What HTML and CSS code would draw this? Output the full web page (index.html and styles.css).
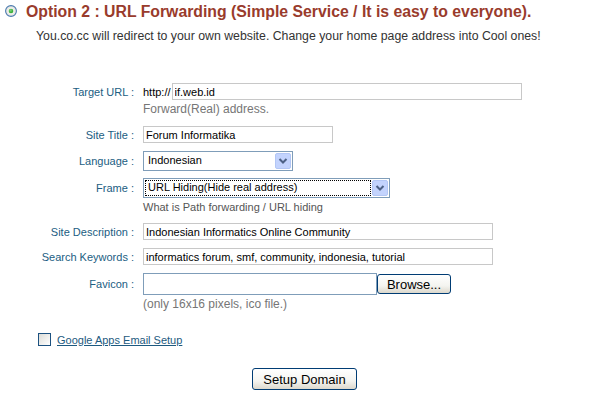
FILE: index.html
```html
<!DOCTYPE html>
<html>
<head>
	<meta http-equiv="Content-Type" content="text/html; charset=utf-8">
	<title>co.cc :: URL Forwarding</title>
	<link rel="stylesheet" href="styles.css">
</head>
<body>
	<div class="option">
		<h2 class="option__title">
			<svg class="option__radio" width="12" height="12" viewBox="0 0 12 12">
				<defs>
					<radialGradient id="radioBg" cx="50%" cy="50%" r="60%">
						<stop offset="0" stop-color="#ffffff"/>
						<stop offset="1" stop-color="#dcdcd4"/>
					</radialGradient>
					<radialGradient id="radioDot" cx="40%" cy="35%" r="70%">
						<stop offset="0" stop-color="#7bd47b"/>
						<stop offset="1" stop-color="#21a121"/>
					</radialGradient>
				</defs>
				<circle cx="6" cy="6" r="5.4" fill="url(#radioBg)" stroke="#4a7ab0" stroke-width="1.1"/>
				<circle cx="6" cy="6" r="2.3" fill="url(#radioDot)"/>
			</svg>
			<span>Option 2 : URL Forwarding (Simple Service / It is easy to everyone).</span>
		</h2>
		<p class="option__intro">You.co.cc will redirect to your own website. Change your home page address into Cool ones!</p>
	</div>

	<form name="forwarding" class="fwd">
		<div class="fwd__row">
			<label class="fwd__label">Target URL :</label>
			<div class="fwd__field">
				<span class="fwd__prefix">http://</span><input class="fwd__inp fwd__inp_url" name="url" value="if.web.id">
			</div>
		</div>
		<div class="fwd__hint">Forward(Real) address.</div>

		<div class="fwd__row fwd__row_title">
			<label class="fwd__label">Site Title :</label>
			<div class="fwd__field">
				<input class="fwd__inp fwd__inp_title" name="title" value="Forum Informatika">
			</div>
		</div>

		<div class="fwd__row fwd__row_lang">
			<label class="fwd__label">Language :</label>
			<div class="fwd__field">
				<div class="combo combo_lang">
					<span class="combo__val">Indonesian</span>
					<span class="combo__btn">
						<svg width="16" height="16" viewBox="0 0 16 16">
							<rect x="0.5" y="0.5" width="15" height="15" rx="1.5" fill="#c3d3fd" stroke="#b2c6f5"/>
							<polyline points="4.5,6 8,9.5 11.5,6" fill="none" stroke="#4d6185" stroke-width="2"/>
						</svg>
					</span>
				</div>
			</div>
		</div>

		<div class="fwd__row fwd__row_frame">
			<label class="fwd__label">Frame :</label>
			<div class="fwd__field">
				<div class="combo combo_frame combo_focus">
					<span class="combo__val">URL Hiding(Hide real address)</span>
					<span class="combo__btn">
						<svg width="16" height="16" viewBox="0 0 16 16">
							<rect x="0.5" y="0.5" width="15" height="15" rx="1.5" fill="#c3d3fd" stroke="#b2c6f5"/>
							<polyline points="4.5,6 8,9.5 11.5,6" fill="none" stroke="#4d6185" stroke-width="2"/>
						</svg>
					</span>
				</div>
			</div>
		</div>
		<div class="fwd__hint fwd__hint_dark">What is Path forwarding / URL hiding</div>

		<div class="fwd__row fwd__row_desc">
			<label class="fwd__label">Site Description :</label>
			<div class="fwd__field">
				<input class="fwd__inp fwd__inp_wide" name="desc" value="Indonesian Informatics Online Community">
			</div>
		</div>

		<div class="fwd__row fwd__row_keys">
			<label class="fwd__label">Search Keywords :</label>
			<div class="fwd__field">
				<input class="fwd__inp fwd__inp_wide" name="keywords" value="informatics forum, smf, community, indonesia, tutorial">
			</div>
		</div>

		<div class="fwd__row fwd__row_icon">
			<label class="fwd__label">Favicon :</label>
			<div class="fwd__field">
				<span class="file"></span><button type="button" class="btn btn_browse">Browse...</button>
			</div>
		</div>
		<div class="fwd__hint">(only 16x16 pixels, ico file.)</div>

		<div class="fwd__check">
			<span class="check"></span>
			<a class="fwd__link" href="#">Google Apps Email Setup</a>
		</div>

		<div class="fwd__submit">
			<button type="button" class="btn btn_submit">Setup Domain</button>
		</div>
	</form>
</body>
</html>
```

FILE: styles.css
```css
body {
	margin: 0;
	font-size: 11px;
	font-family: "Liberation Sans", Arial, sans-serif;
	color: #000;
	background-color: #fff;
}


.option {
	padding: 3px 0 0 5px;
}
	.option__title {
		display: flex;
		align-items: center;
		gap: 9px;
		margin: 0;
		color: #993b2c;
		font-size: 15.8px;
		line-height: 18px;
		font-weight: bold;
	}
		.option__radio {
			margin-top: -2px;
			flex: none;
		}

	.option__intro {
		margin: 8px 0 0 31px;
		color: #333;
		font-size: 12.3px;
		line-height: 14px;
	}


.fwd {
	margin: 40px 0 0;
}
	.fwd__row {
		display: flex;
		align-items: center;
		gap: 9px;
		height: 17px;
	}
	.fwd__row_title { margin-top: 10px; }
	.fwd__row_lang { margin-top: 8px; height: 20px; }
	.fwd__row_frame { margin-top: 7px; height: 20px; }
	.fwd__row_desc { margin-top: 9px; }
	.fwd__row_keys { margin-top: 8px; }
	.fwd__row_icon { margin-top: 8px; height: 22px; }

		.fwd__label {
			width: 134px;
			flex: none;
			text-align: right;
			color: #215d82;
		}

		.fwd__field {
			display: flex;
			align-items: center;
		}
			.fwd__prefix {
				margin-right: 1px;
			}

	.fwd__hint {
		margin: 2px 0 0 143px;
		font-size: 12px;
		line-height: 14px;
		color: #767676;
	}
	.fwd__hint_dark {
		font-size: 11px;
		color: #555;
	}

	.fwd__check {
		display: flex;
		align-items: center;
		gap: 6px;
		margin: 22px 0 0 38px;
	}
		.fwd__link {
			color: #1d5a80;
		}

	.fwd__submit {
		margin: 22px 0 0 252px;
	}


.fwd__inp {
	box-sizing: border-box;
	height: 17px;
	margin: 0;
	padding: 0 2px;
	border: 1px solid #c8c8c8;
	font: 11px "Liberation Sans", Arial, sans-serif;
	color: #000;
	outline: none;
}
.fwd__inp_url { width: 350px; }
.fwd__inp_title { width: 190px; }
.fwd__inp_wide { width: 350px; }


.combo {
	box-sizing: border-box;
	display: flex;
	align-items: center;
	height: 20px;
	padding: 1px;
	border: 1px solid #7f9db9;
	background-color: #fff;
}
.combo_lang { width: 150px; }
.combo_frame { width: 247px; }
	.combo__val {
		flex: 1;
		box-sizing: border-box;
		height: 16px;
		margin-right: 1px;
		padding: 0 3px;
		line-height: 15px;
		font-size: 11px;
	}
	.combo_focus .combo__val {
		outline: 1px dotted #000;
		outline-offset: -1px;
	}
	.combo__btn {
		display: block;
		height: 16px;
	}
		.combo__btn svg { display: block; }


.file {
	box-sizing: border-box;
	display: block;
	width: 234px;
	height: 22px;
	border: 1px solid #7f9db9;
	background-color: #fff;
}


.btn {
	box-sizing: border-box;
	margin: 0;
	padding: 0;
	border: 1px solid #003c74;
	border-radius: 3px;
	background: linear-gradient(#ffffff, #f4f4f0 60%, #dcd8cc);
	font: 13px "Liberation Sans", Arial, sans-serif;
	color: #000;
}
.btn_browse {
	width: 74px;
	height: 20px;
}
.btn_submit {
	width: 105px;
	height: 22px;
}


.check {
	box-sizing: border-box;
	display: block;
	width: 13px;
	height: 13px;
	border: 1px solid #1c5180;
	background: linear-gradient(135deg, #dcdcd7, #ffffff);
}
```
